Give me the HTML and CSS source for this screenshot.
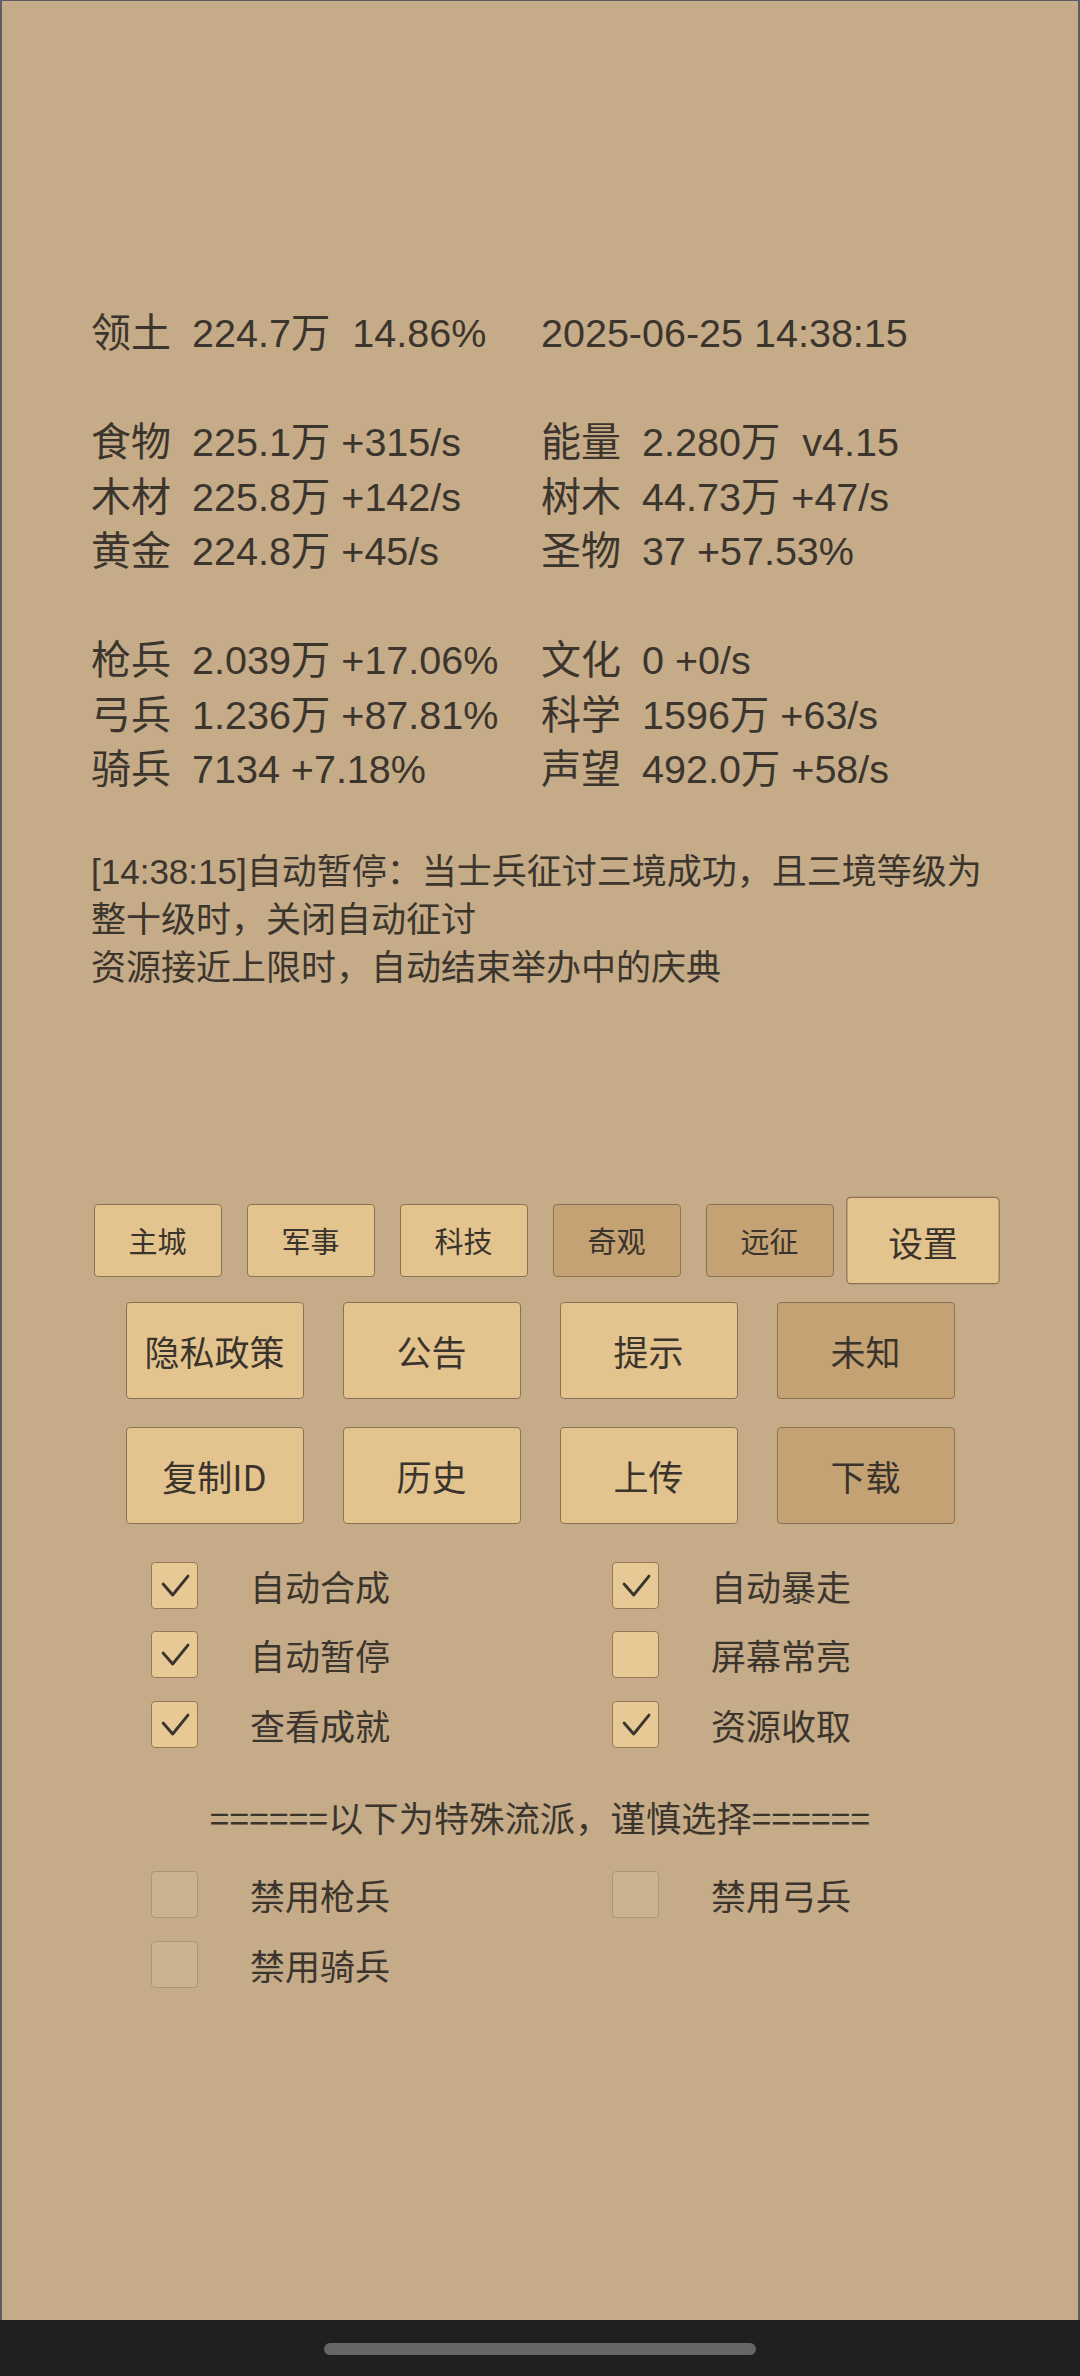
FILE: index.html
```html
<!DOCTYPE html>
<html lang="zh-CN">
<head>
<meta charset="utf-8">
<title>Game</title>
<link rel="stylesheet" href="styles.css">
</head>
<body>
<div class="app">
  <div class="stats">
    <div class="cell"><span class="lbl">领土</span><span class="val">224.7万&nbsp; 14.86%</span></div>
    <div class="cell"><span class="val">2025-06-25 14:38:15</span></div>
    <div class="cell blank"></div><div class="cell blank"></div>
    <div class="cell"><span class="lbl">食物</span><span class="val">225.1万 +315/s</span></div>
    <div class="cell"><span class="lbl">能量</span><span class="val">2.280万&nbsp; v4.15</span></div>
    <div class="cell"><span class="lbl">木材</span><span class="val">225.8万 +142/s</span></div>
    <div class="cell"><span class="lbl">树木</span><span class="val">44.73万 +47/s</span></div>
    <div class="cell"><span class="lbl">黄金</span><span class="val">224.8万 +45/s</span></div>
    <div class="cell"><span class="lbl">圣物</span><span class="val">37 +57.53%</span></div>
    <div class="cell blank"></div><div class="cell blank"></div>
    <div class="cell"><span class="lbl">枪兵</span><span class="val">2.039万 +17.06%</span></div>
    <div class="cell"><span class="lbl">文化</span><span class="val">0 +0/s</span></div>
    <div class="cell"><span class="lbl">弓兵</span><span class="val">1.236万 +87.81%</span></div>
    <div class="cell"><span class="lbl">科学</span><span class="val">1596万 +63/s</span></div>
    <div class="cell"><span class="lbl">骑兵</span><span class="val">7134 +7.18%</span></div>
    <div class="cell"><span class="lbl">声望</span><span class="val">492.0万 +58/s</span></div>
  </div>

  <div class="log">
    <p>[14:38:15]自动暂停：当士兵征讨三境成功，且三境等级为整十级时，关闭自动征讨</p>
    <p>资源接近上限时，自动结束举办中的庆典</p>
  </div>

  <div class="tabs">
    <button class="btn tab">主城</button>
    <button class="btn tab">军事</button>
    <button class="btn tab">科技</button>
    <button class="btn tab dark">奇观</button>
    <button class="btn tab dark">远征</button>
    <button class="btn tab active">设置</button>
  </div>

  <div class="actions">
    <button class="btn act">隐私政策</button>
    <button class="btn act">公告</button>
    <button class="btn act">提示</button>
    <button class="btn act dark">未知</button>
  </div>
  <div class="actions second">
    <button class="btn act">复制ID</button>
    <button class="btn act">历史</button>
    <button class="btn act">上传</button>
    <button class="btn act dark">下载</button>
  </div>

  <div class="checks">
    <div class="chk"><span class="box on"><svg viewBox="0 0 47 47"><polyline points="11.6,22 21.6,33.4 37.6,13.7"/></svg></span><span class="ctext">自动合成</span></div>
    <div class="chk"><span class="box on"><svg viewBox="0 0 47 47"><polyline points="11.6,22 21.6,33.4 37.6,13.7"/></svg></span><span class="ctext">自动暴走</span></div>
    <div class="chk"><span class="box on"><svg viewBox="0 0 47 47"><polyline points="11.6,22 21.6,33.4 37.6,13.7"/></svg></span><span class="ctext">自动暂停</span></div>
    <div class="chk"><span class="box"></span><span class="ctext">屏幕常亮</span></div>
    <div class="chk"><span class="box on"><svg viewBox="0 0 47 47"><polyline points="11.6,22 21.6,33.4 37.6,13.7"/></svg></span><span class="ctext">查看成就</span></div>
    <div class="chk"><span class="box on"><svg viewBox="0 0 47 47"><polyline points="11.6,22 21.6,33.4 37.6,13.7"/></svg></span><span class="ctext">资源收取</span></div>
  </div>

  <div class="sep">======以下为特殊流派，谨慎选择======</div>

  <div class="checks special">
    <div class="chk"><span class="box off"></span><span class="ctext">禁用枪兵</span></div>
    <div class="chk"><span class="box off"></span><span class="ctext">禁用弓兵</span></div>
    <div class="chk"><span class="box off"></span><span class="ctext">禁用骑兵</span></div>
  </div>
</div>
<div class="navbar"><span class="pill"></span></div>
</body>
</html>
```
FILE: styles.css
```css
* { box-sizing: border-box; }
html, body { margin: 0; padding: 0; }
body {
  width: 1080px;
  height: 2376px;
  background: #202020;
  color: #3b352e;
  font-family: "Liberation Sans", "Noto Sans CJK SC", sans-serif;
  display: flex;
  flex-direction: column;
  overflow: hidden;
}
.app {
  height: 2320px;
  background: #c5ab87;
  border: 2px solid #5b5e66;
  border-bottom: none;
  border-top-width: 1px;
  padding-top: 305px;
  display: flex;
  flex-direction: column;
}
.stats {
  display: grid;
  grid-template-columns: 450px 450px;
  padding-left: 89px;
  font-size: 39.5px;
  line-height: 54.5px;
}
.cell { height: 54.5px; white-space: nowrap; }
.lbl { display: inline-block; width: 101px; font-size: 40px; }
.log {
  margin-top: 51px;
  padding-left: 89px;
  width: 989px;
  font-size: 35px;
  line-height: 48px;
}
.log p { margin: 0; }
.btn {
  font-family: "Noto Sans CJK SC", sans-serif;
  color: #3b342c;
  background: #e3c48f;
  border: 1.5px solid #8b7254;
  border-radius: 4px;
  padding: 0;
  margin: 0;
}
.btn.dark { background: #c4a273; }
.tabs {
  margin-top: 212px;
  display: flex;
  justify-content: center;
  gap: 25px;
}
.tab {
  width: 128px;
  height: 73px;
  font-size: 29px;
}
.tab.active { transform: scale(1.2); }
.actions {
  margin-top: 25px;
  display: flex;
  justify-content: center;
  gap: 39px;
}
.actions.second { margin-top: 28px; }
.act {
  width: 178px;
  height: 97px;
  font-size: 35px;
}
.checks {
  margin-top: 27px;
  display: grid;
  grid-template-columns: 461px 461px;
  padding-left: 149px;
}
.chk {
  height: 69.5px;
  display: flex;
  align-items: center;
  font-family: "Noto Sans CJK SC", sans-serif;
  font-size: 35px;
}
.box {
  width: 47px;
  height: 47px;
  border: 1.5px solid #977a55;
  border-radius: 4px;
  background: #e6c995;
  display: flex;
}
.box svg { width: 100%; height: 100%; }
.box polyline {
  fill: none;
  stroke: #3b352e;
  stroke-width: 3;
  stroke-linecap: round;
  stroke-linejoin: round;
}
.box.off { background: #cbb290; border-color: #ad9674; }
.ctext { margin-left: 52px; }
.sep {
  margin-top: 34px;
  text-align: center;
  font-family: "Noto Sans CJK SC", sans-serif;
  font-size: 35px;
  line-height: 48px;
  letter-spacing: 0.3px;
}
.special { margin-top: 19px; }
.navbar {
  flex: 1;
  display: flex;
  justify-content: center;
  padding-top: 23px;
}
.pill {
  width: 432px;
  height: 12px;
  border-radius: 6px;
  background: #666666;
}
```
